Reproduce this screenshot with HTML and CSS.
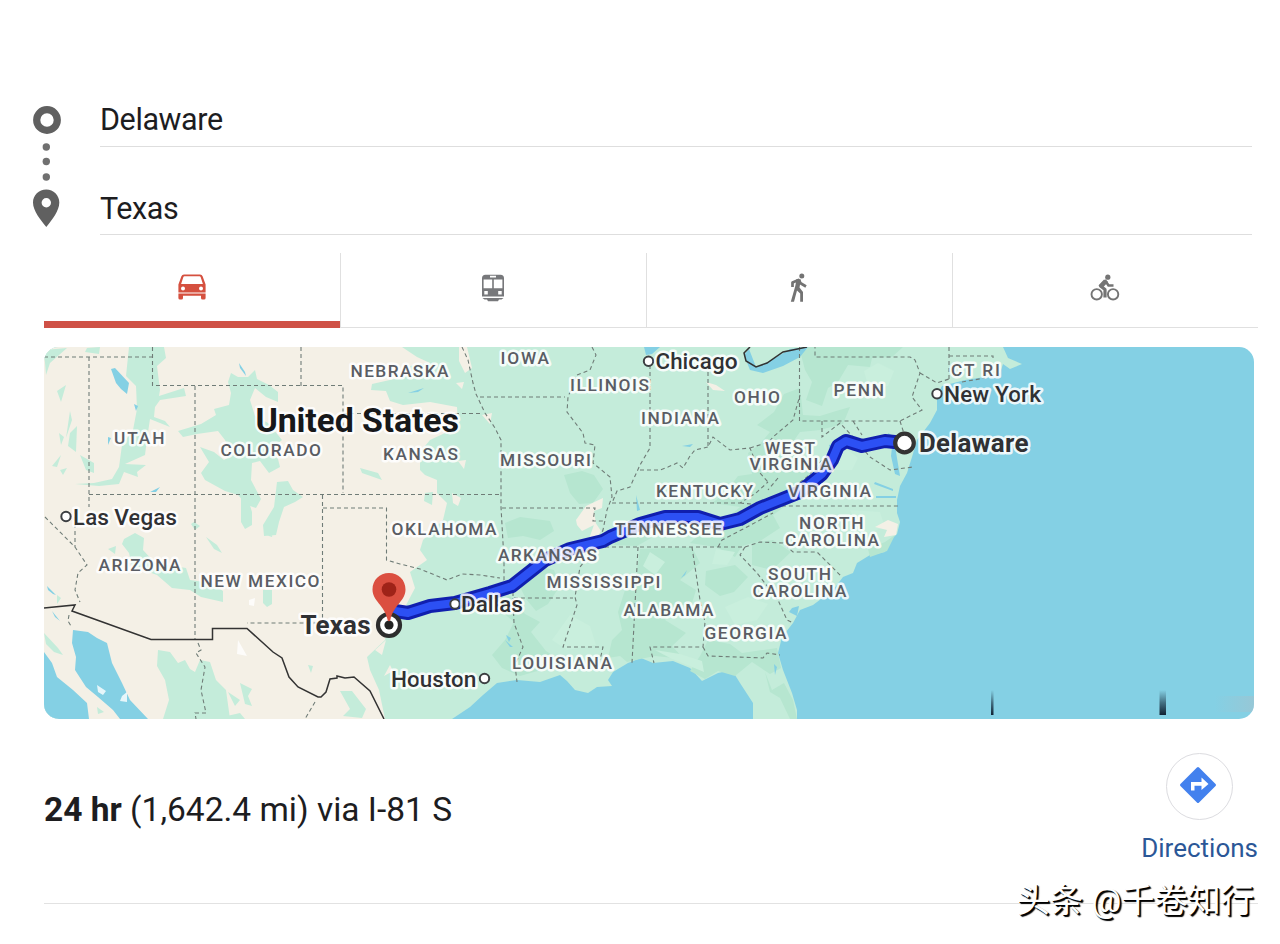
FILE: index.html
```
<!DOCTYPE html>
<html lang="en">

<head>
    <meta charset="UTF-8">
    <meta name="viewport" content="width=device-width, initial-scale=1.0">
    <title>Delaware to Texas</title>
    <link rel="stylesheet" href="styles.css">
</head>

<body>
    <div class="container">
        <div class="route-form">
            <svg class="route-icons" width="30" height="124" viewBox="32 105 30 124">
                <circle cx="47" cy="120" r="10.3" fill="none" stroke="#606060" stroke-width="7.2"/>
                <g fill="#707070">
                    <circle cx="46.3" cy="147" r="3.7"/>
                    <circle cx="46.3" cy="161.5" r="3.7"/>
                    <circle cx="46.3" cy="177" r="3.7"/>
                </g>
                <path fill="#606060" fill-rule="evenodd" d="M46.3 189.5C38.8 189.5 33 195.3 33 202.5C33 211 40.5 219.5 46.3 227C52.1 219.5 59.3 211 59.3 202.5C59.3 195.3 53.5 189.5 46.3 189.5ZM46.3 198A4.7 4.7 0 1 1 46.3 207.4A4.7 4.7 0 1 1 46.3 198Z"/>
            </svg>
            <div class="fields">
                <div class="field">Delaware</div>
                <div class="field">Texas</div>
            </div>
        </div>

        <div class="tabs">
            <div class="tab active">
                <svg width="28" height="26" viewBox="0 0 28 26">
                    <path fill="#d5503f" fill-rule="evenodd" d="M6 .5H22Q24 .5 24.6 2.3L27.6 10.5V18.5H.4V10.5L3.4 2.3Q4 .5 6 .5ZM6.5 2.3Q5.6 2.3 5.3 3.2L3.1 10H24.9L22.7 3.2Q22.4 2.3 21.5 2.3ZM5 12.6A2 2 0 1 0 5 16.6A2 2 0 1 0 5 12.6ZM23 12.6A2 2 0 1 0 23 16.6A2 2 0 1 0 23 12.6Z"/>
                    <path fill="#d5503f" d="M.4 19.6H27.6V24Q27.6 25.5 26 25.5H24.5Q23 25.5 23 24V21.8H5V24Q5 25.5 3.5 25.5H2Q.4 25.5 .4 24Z"/>
                </svg>
            </div>
            <div class="tab">
                <svg width="24" height="28" viewBox="0 0 24 28">
                    <path fill="#77787b" fill-rule="evenodd" d="M4.5 .8H19.5Q23 .8 23 4.3V22.5H1V4.3Q1 .8 4.5 .8ZM9 1.8V3.6H15V1.8ZM2.6 5.5V14.3H11.2V5.5ZM12.8 5.5V14.3H21.4V5.5ZM3.3 17V20.5H6.8V17ZM17.2 17V20.5H20.7V17Z"/>
                    <path fill="#77787b" d="M1.5 24H22.5L20.5 25.5H18L17 27.2H7L6 25.5H3.5Z"/>
                </svg>
            </div>
            <div class="tab">
                <svg width="18" height="30" viewBox="0 0 18 30">
                    <circle cx="11.8" cy="3" r="2.5" fill="#737373"/>
                    <path fill="none" stroke="#737373" stroke-width="2.7" stroke-linejoin="round" d="M2.500 14V9.500L8.500 7L11 10.500L16 13.500"/>
                    <path fill="#737373" d="M6.500 6L11 6.500L9.500 14.500L13 19V28.800H10.200V20.500L7 17.500L4 28.800H.8L5.300 13Z"/>
                </svg>
            </div>
            <div class="tab">
                <svg width="30" height="28" viewBox="0 0 30 28">
                    <g fill="none" stroke="#747474">
                        <circle cx="6.700" cy="20.300" r="5.200" stroke-width="1.900"/>
                        <circle cx="23.100" cy="20.300" r="5.200" stroke-width="1.900"/>
                        <path stroke-width="3.200" stroke-linejoin="round" d="M16.500 6.500L10.500 12L15 15.500V23.500"/>
                        <path stroke-width="2.600" d="M15.500 7L18.500 11.500H23.500"/>
                    </g>
                    <circle cx="17.800" cy="3.200" r="2.600" fill="#747474"/>
                    <path fill="#747474" d="M8.500 11.500L14 5.500L18 8L12.500 14Z"/>
                </svg>
            </div>
        </div>

        <svg class="map" viewBox="44 347 1210 372">
            <!-- land -->
            <path class="land" d="M44 347H1003L1008 358L1022 364L1010 369L1003 364L1000 373L985 377L965 380L942 386L937 395V410L930 423L917 440L912 457L907 473L900 486L897 500V513L900 522L897 534L887 543L885 552L870 555L857 563L853 573L843 577L833 590L813 605L800 610L793 623L782 637L778 653L783 670L792 693L797 710V719H753V703L740 683L735 675L728 671L718 673L710 677L702 681L690 668L673 661L653 663L641 658L628 663L613 672L608 680L612 686L597 687L588 693L575 690L567 681L560 675L540 682L517 680L497 683L483 695L470 707L452 719H44Z"/>
            <path class="forest" d="M799 347H903L892 357L872 358L870 367L848 365L838 382L828 388L822 406L806 400L812 382L805 370ZM800 388L784 394L774 412L757 425L770 432L760 444L748 453L752 474L738 476L724 494L712 503L740 507L720 524L702 532L690 543L716 547L735 557L742 546L760 541L780 528L773 515L798 497L812 480L805 460L790 446L800 432L820 430L843 424L850 407L836 411L820 416L803 415Z"/>
            <path class="forest" d="M640 549L692 547L700 563L680 580L696 590L692 603L670 608L665 620L686 633L672 646L684 659L655 656L640 659L627 662L620 656L608 658L612 640L622 630L618 612L625 590L636 578ZM706 571L735 565L748 577L734 592L720 596L705 585ZM708 640L730 644L742 653L777 648L781 668L770 674L752 662L735 676L718 671L705 679L690 671L700 656Z"/>
            <path class="forest" d="M564 475L582 471L594 475L603 489L593 503L579 504L570 493ZM505 523L520 517L550 521L554 531L540 540L523 536L508 538ZM515 577L537 566L554 570L560 586L548 604L536 611L526 599ZM480 602L510 596L525 614L540 622L531 632L546 651L565 663L520 676L502 668L492 655L505 640L514 622L501 611ZM752 543L773 540L791 552L772 570L752 565ZM868 549L885 542L895 535L887 551L870 557ZM620 531L640 527L651 538L637 546L614 545ZM765 672L772 690L784 683L793 700L797 719H790L780 698L770 692Z"/>
            <path class="meadow" d="M655 650L680 654L702 661L704 672L692 667L672 659ZM725 607L748 597L768 604L757 620L735 625ZM650 552L665 562L655 575L643 566ZM864 371L878 363L894 371L888 386L869 389ZM829 454L845 448L858 458L852 470L834 470ZM716 549L735 552L727 565L712 564ZM850 510L880 512L885 527L862 535ZM552 640L570 615L590 626L596 645L567 650Z"/>

            <!-- dry west -->
            <path class="desert" d="M44 347H402L417 357L430 363L410 366L412 375L372 384L371 390L386 391L390 401L403 405L430 402L457 407L458 427L430 440L420 452V470L425 475L437 480V493L447 503L443 520L423 540L420 550L427 560L410 572L415 588L405 607L389 620L385 640L367 657L370 670L379 690L385 719H44Z"/>
            <path class="desert" d="M459 347H467L472 368L465 373L459 361ZM456 383L464 382L462 389ZM482 415L492 413L490 424ZM458 461L466 460L464 469ZM452 493L461 498L458 506L453 503ZM576 520L586 506L603 498L602 508L594 511L596 524L582 531L577 525ZM590 536L595 522L601 531L592 547ZM706 382L716 385L725 391L713 390ZM875 527L888 520L898 524L896 535L884 537L887 530ZM375 650L386 640L382 655ZM390 665L384 676L393 671Z"/>

            <!-- green areas in the west -->
            <g class="land">
                <path d="M129 347H164L166 358L157 366L160 390L159 396L184 388L186 396L160 400L155 407L154 417L165 421L170 427L150 419L147 439L145 455L125 464L146 465L137 472L138 477L124 472L119 484L99 486L75 484L94 483L112 479L119 467L122 445L133 430L137 409L136 386L126 376Z"/>
                <path d="M231 373L238 377H248L255 370L257 379L269 385L278 392L278 402L266 397L255 388L250 400L255 416L268 423L274 430L282 440L270 450L278 459L280 467L269 473L260 461L252 463L251 480L261 499L256 508L247 505L238 495L225 491L205 480L201 473L209 462L200 447L214 452L224 460L232 455L225 440L218 431L197 434L183 437L178 431L201 424L216 415L214 409L229 405L231 393L228 382Z"/>
                <path d="M277 482L288 481L293 490L303 497L295 502L284 507L279 522L276 535L264 536L263 525L274 507ZM241 497L248 499L252 512L252 525L245 529L241 522ZM194 522L200 526L195 530L191 524ZM124 539L135 533L144 538L143 550L155 563L186 568L190 580L211 583L223 591L223 602L201 597L190 590L172 588L157 575L132 566L129 553L122 544ZM108 549L116 546L115 554ZM206 537L217 545L222 553L214 549ZM263 590H272V604L267 607L263 603ZM264 530L274 529L272 537L266 535Z"/>
                <path d="M44 350L67 348L50 363L46 375ZM57 391L66 385L61 402ZM70 411L72 420L66 438ZM70 433L77 426L76 452L68 446ZM59 433L64 437L61 445ZM52 466L61 455L57 467ZM80 455L94 463L94 473L86 470ZM87 348L100 347L99 354L85 352ZM57 595L61 598L57 604ZM44 633L58 648L63 655L54 652L46 644ZM97 707L104 712L98 714ZM60 470L67 468L63 475Z"/>
                <path d="M158 650L170 652L178 663L185 660L190 669L195 672L200 660L210 662L216 680L226 690L230 719H163L169 700L165 680L157 666ZM228 692L240 700L235 706ZM240 683L252 689L248 696L252 706L245 704ZM227 716L240 713L245 719H226ZM340 691L352 691L366 709L362 718L343 716L350 709ZM308 665L313 666L311 673ZM360 468L378 473L382 480L362 473ZM425 493L433 492L432 505L424 501Z"/>
            </g>

            <!-- lakes and gulf -->
            <path class="water" d="M73 630L88 632L97 638L107 643L112 663L122 683L130 700L148 719H120L113 710L98 697L86 687L75 670L76 657L72 643ZM44 652L52 663L57 677L73 690L87 703L89 719H44ZM111 369L115 368L129 383L127 394L121 389L116 383ZM644 347H660L652 354L646 355ZM749 349L744 355L750 370L763 373L783 366L800 357L808 347L790 349L770 361L756 367ZM47 586L56 595L53 594L48 590ZM52 611L60 621L55 617ZM134 404L138 406L136 411ZM108 437L111 438L108 445ZM150 492L160 487L156 492ZM239 363L245 372L246 376L240 368ZM408 393L424 388L418 392ZM636 495L640 510L637 511Z"/>
            <path class="water" d="M888 433L895 437L896 452L900 476L895 474L891 456L892 447ZM875 482L893 489V491L874 484ZM876 496L896 496V498L876 498ZM829 445L833 444L830 449ZM682 446L693 444L690 447ZM681 578L687 570L685 575ZM792 608L799 606L797 616L789 612ZM465 605L475 600L467 607ZM505 640L513 647L510 647ZM506 635L511 638L509 642ZM774 664L777 667L775 675Z"/>
            <path fill="#fff" d="M97 685L106 691L103 695L98 692ZM122 696L127 692V702L120 701ZM238 640L247 656L237 654ZM249 600L255 598L254 606L249 605Z" opacity=".8"/>

            <!-- state lines -->
            <path class="state" d="M44 357H152M89 357V507M152.500 347V385.500H343V493M195 386V640M89 494.500H501M301 347V386M322.500 495V623H247M323 508H386.500V560L400 564L420 569L430 573L447 580L462 574L480 575L500 578M343 413.500H483"/>
            <path class="state" d="M462 347L468 360L473 383L476 394L485 413L495 428L501 440V507L504 560V580L513 585V598H573M513 598L514 623L523 647L515 665L517 682M502 508H595L593 521H605M480 397H565M592 347L596 355L590 370L577 375L568 397L567 412L583 433L585 443L595 445L593 463L610 477L612 497L607 510L603 530L595 548L580 567L575 597L577 605L573 617L563 647H603L600 660"/>
            <path class="state" d="M605 547H745M638 547L632 663M692 547L700 600L705 622L703 647H650L654 663M703 647L708 656L763 658L767 653L780 655M745 547L740 555L757 573L778 600L787 620L793 623M718 547L722 540L747 527L773 513M745 547L760 542L783 543L793 552H817L842 577"/>
            <path class="state" d="M612 503H740L756 493L768 482M740 503L772 506H900M650 365V448L640 465L630 487L617 491L612 503M640 470L660 470L668 467L677 463L683 468L690 456L695 450L708 447L713 437L730 450L750 448L760 473L768 482M708 365V447M750 448L769 442L773 437L793 420L800 395"/>
            <path class="state" d="M799.500 347V421H900L922 410L912 397L920 373L915 360L910 357H815V347M920 373L937 383L949 379M822 421V437L840 423L853 437L870 457L890 470L913 467M853 421L862 435M900 421L906 440M949 347V380M949 356H993V361M962 382L985 378M822 460L807 477L795 486M778 478L768 490M45 517L75 547L87 565L78 573L75 590L80 602M75 510V547M198 643L201 650L196 653L205 667L201 690L206 713H195L196 719M69 615L68 621L71 626M315 702L305 719"/>
            <path class="country" d="M44 608L75 605L72 611L151 639.500H212.500V628.500H247L273 652L282 658L289 677L298 687L318 697H321L326 692L330 679L337 678V676L345 678L354 677L370 691L384 719M750 347L744 353L746 361L756 367L767 363L783 352L807 347"/>

            <!-- driving route -->
            <g class="route">
                <path class="route-edge" d="M904 443L885 441L862 446L846 441L838 446L832 460L822 474L800 492L760 508L740 519L720 524L698 517L665 517L640 524L610 537L603 541L570 549L545 560L512 586L490 593L455 603L430 606L408 613L395 611"/>
                <path class="route-line" d="M904 443L885 441L862 446L846 441L838 446L832 460L822 474L800 492L760 508L740 519L720 524L698 517L665 517L640 524L610 537L603 541L570 549L545 560L512 586L490 593L455 603L430 606L408 613L395 611"/>
            </g>

            <g class="state-name">
                <text x="114" y="444" textLength="50.500">UTAH</text>
                <text x="220.500" y="455.500" textLength="100.500">COLORADO</text>
                <text x="350.500" y="377" textLength="98">NEBRASKA</text>
                <text x="383" y="460" textLength="75">KANSAS</text>
                <text x="500.500" y="363.500" textLength="48.500">IOWA</text>
                <text x="570" y="391" textLength="79">ILLINOIS</text>
                <text x="500" y="466" textLength="91">MISSOURI</text>
                <text x="734" y="402.500" textLength="46">OHIO</text>
                <text x="641" y="424" textLength="78">INDIANA</text>
                <text x="833.500" y="396" textLength="50.500">PENN</text>
                <text x="765" y="453.500" textLength="50">WEST</text>
                <text x="749.500" y="470" textLength="82">VIRGINIA</text>
                <text x="656" y="496.500" textLength="97">KENTUCKY</text>
                <text x="788" y="496.500" textLength="83">VIRGINIA</text>
                <text x="799" y="529" textLength="64.500">NORTH</text>
                <text x="785" y="545.500" textLength="94">CAROLINA</text>
                <text x="615" y="534.500" textLength="107">TENNESSEE</text>
                <text x="391.500" y="535" textLength="105">OKLAHOMA</text>
                <text x="498" y="560.500" textLength="99">ARKANSAS</text>
                <text x="546.500" y="588" textLength="114">MISSISSIPPI</text>
                <text x="623.500" y="616" textLength="90">ALABAMA</text>
                <text x="704.500" y="638.500" textLength="82">GEORGIA</text>
                <text x="768" y="580" textLength="63">SOUTH</text>
                <text x="752.500" y="597" textLength="94">CAROLINA</text>
                <text x="512" y="668.500" textLength="100">LOUISIANA</text>
                <text x="98.500" y="571" textLength="82">ARIZONA</text>
                <text x="200.500" y="586.500" textLength="119">NEW MEXICO</text>
                <text x="951" y="375.500" textLength="49">CT RI</text>
            </g>

            <g class="city-dot">
                <circle cx="66" cy="516.500" r="4.700"/>
                <circle cx="648.500" cy="361.300" r="4.700"/>
                <circle cx="937" cy="393.700" r="4.700"/>
                <circle cx="455" cy="604" r="4.700"/>
                <circle cx="484.500" cy="678.500" r="4.700"/>
            </g>
            <g class="city-name">
                <text x="73" y="524.500" textLength="104">Las Vegas</text>
                <text x="655.500" y="369" textLength="82">Chicago</text>
                <text x="944" y="401.500" textLength="97">New York</text>
                <text x="461" y="612" textLength="62">Dallas</text>
                <text x="391" y="686.500" textLength="85.500">Houston</text>
            </g>
            <g class="place-name">
                <text x="919" y="452" textLength="109.500">Delaware</text>
                <text x="300.500" y="634" textLength="70">Texas</text>
            </g>
            <text class="country-name" x="255.500" y="431.500" textLength="203.500">United States</text>

            <!-- start and end markers -->
            <circle cx="904.500" cy="443" r="9.300" fill="#fff" stroke="#333" stroke-width="4.200"/>
            <circle cx="389" cy="625" r="11" fill="#fff" stroke="#2d2d2d" stroke-width="4.200"/>
            <circle cx="389" cy="625" r="4.600" fill="#222"/>
            <path fill="#db4f40" d="M389 573C379.500 573 372.500 580 372.500 589.500C372.500 601 384.500 605 387.700 620Q389 622.500 390.300 620C393.500 605 405.500 601 405.500 589.500C405.500 580 398.500 573 389 573Z"/>
            <circle cx="389" cy="589.500" r="7.300" fill="#9f2318"/>

            <defs>
                <linearGradient id="tick" x1="0" y1="0" x2="0" y2="1">
                    <stop offset="0" stop-color="#123" stop-opacity="0"/>
                    <stop offset=".5" stop-color="#123" stop-opacity=".55"/>
                    <stop offset="1" stop-color="#123"/>
                </linearGradient>
                <linearGradient id="haze" x1="0" y1="0" x2="1" y2="0">
                    <stop offset="0" stop-color="#a9bfc9" stop-opacity="0"/>
                    <stop offset="1" stop-color="#a9bfc9" stop-opacity=".5"/>
                </linearGradient>
            </defs>
            <rect x="1215" y="696" width="39" height="16" fill="url(#haze)"/>
            <rect x="991" y="690" width="2.500" height="25" fill="url(#tick)"/>
            <rect x="1159.500" y="690" width="6.500" height="25" fill="url(#tick)"/>
        </svg>

        <div class="summary">
            <p class="trip"><b>24 hr</b> (1,642.4 mi) via I-81 S</p>
            <div class="directions">
                <div class="circle">
                    <svg width="38" height="38" viewBox="0 0 38 38">
                        <path fill="#4381ee" stroke="#4381ee" stroke-width="3" stroke-linejoin="round" d="M19 2.500L35.500 19L19 35.500L2.500 19Z"/>
                        <path fill="#fff" d="M12 24.500V16H22.500V11.500L29.500 18L22.500 24V19.700H15.500V24.500Z"/>
                    </svg>
                </div>
                <span>Directions</span>
            </div>
        </div>
        <div class="watermark">头条 @千卷知行</div>
    </div>
</body>

</html>
```
FILE: styles.css
```
body {
    font-family: Roboto, "Noto Sans CJK SC", sans-serif;
    background-color: #fff;
    color: #1d1d1f;
    margin: 0;
}

.container {
    position: relative;
    width: 1280px;
    height: 944px;
    box-sizing: border-box;
    padding: 87px 22px 0 44px;
    overflow: hidden;
}

.route-form {
    display: flex;
    gap: 38px;
    margin-left: -12px;
    margin-right: 6px;
}

.route-icons {
    margin-top: 18px;
    flex: none;
}

.fields {
    flex: 1;
}

.field {
    height: 59px;
    line-height: 65px;
    font-size: 30.5px;
    letter-spacing: -0.4px;
    border-bottom: 1px solid #dedede;
}

.field + .field {
    height: 87px;
    line-height: 124px;
}

/* travel modes */
.tabs {
    display: flex;
    height: 75px;
    margin-top: 18px;
    margin-bottom: 19px;
}

.tab {
    flex: 1;
    box-sizing: border-box;
    display: flex;
    align-items: center;
    justify-content: center;
    border-left: 1px solid #e0e0e0;
    border-bottom: 1px solid #e0e0e0;
    padding-bottom: 4px;
    padding-right: 1px;
}

.tab.active {
    flex: none;
    width: 296px;
    border-left: none;
    border-bottom: 7px solid #cf5146;
    padding: 0;
}

.map {
    display: block;
    width: 1210px;
    height: 372px;
    border-radius: 15px;
    background-color: #84d0e4;
}

.land {
    fill: #c4ecda;
}

.forest {
    fill: #b6e6d0;
}

.meadow {
    fill: #c9efdd;
}

.desert {
    fill: #f4f0e6;
}

.water {
    fill: #84d0e4;
}

.state {
    fill: none;
    stroke: #6f7c77;
    stroke-width: 1.1;
    stroke-dasharray: 4 3;
}

.country {
    fill: none;
    stroke: #333;
    stroke-width: 1.5;
}

.route {
    fill: none;
    stroke-linejoin: round;
    stroke-linecap: round;
}

.route-edge {
    stroke: #101fae;
    stroke-width: 14;
}

.route-line {
    stroke: #2c50f4;
    stroke-width: 8;
}

.map text {
    paint-order: stroke;
    stroke: rgba(255, 255, 255, 0.85);
    stroke-width: 5px;
    stroke-linejoin: round;
}

.state-name {
    font-size: 17.3px;
    font-weight: 500;
    fill: #5a5d64;
}

.city-name {
    font-size: 22.7px;
    font-weight: 500;
    fill: #303134;
}

.place-name {
    font-size: 26px;
    font-weight: 700;
    fill: #303134;
}

.country-name {
    font-size: 34px;
    font-weight: 700;
    fill: #17181a;
}

.city-dot {
    fill: #fff;
    stroke: #3c3f42;
    stroke-width: 2;
}

.summary {
    display: flex;
    justify-content: space-between;
    height: 184px;
    border-bottom: 1px solid #e2e2e2;
}

.trip {
    margin: 71px 0 0;
    font-size: 33.5px;
    line-height: 40px;
}

.directions {
    display: flex;
    flex-direction: column;
    align-items: center;
    padding-top: 34px;
    font-size: 26px;
    line-height: 30px;
    color: #2b5797;
}

.circle {
    display: flex;
    align-items: center;
    justify-content: center;
    box-sizing: border-box;
    width: 67px;
    height: 67px;
    padding: 0 3px 3px 0;
    border: 1px solid #dcdce0;
    border-radius: 50%;
    margin-bottom: 13px;
}

.watermark {
    position: absolute;
    right: 26px;
    top: 877px;
    font-size: 33.2px;
    line-height: 48px;
    color: #fff;
    text-shadow: 1px 1px 0 #000, 2px 2px 1px #000;
}
```
